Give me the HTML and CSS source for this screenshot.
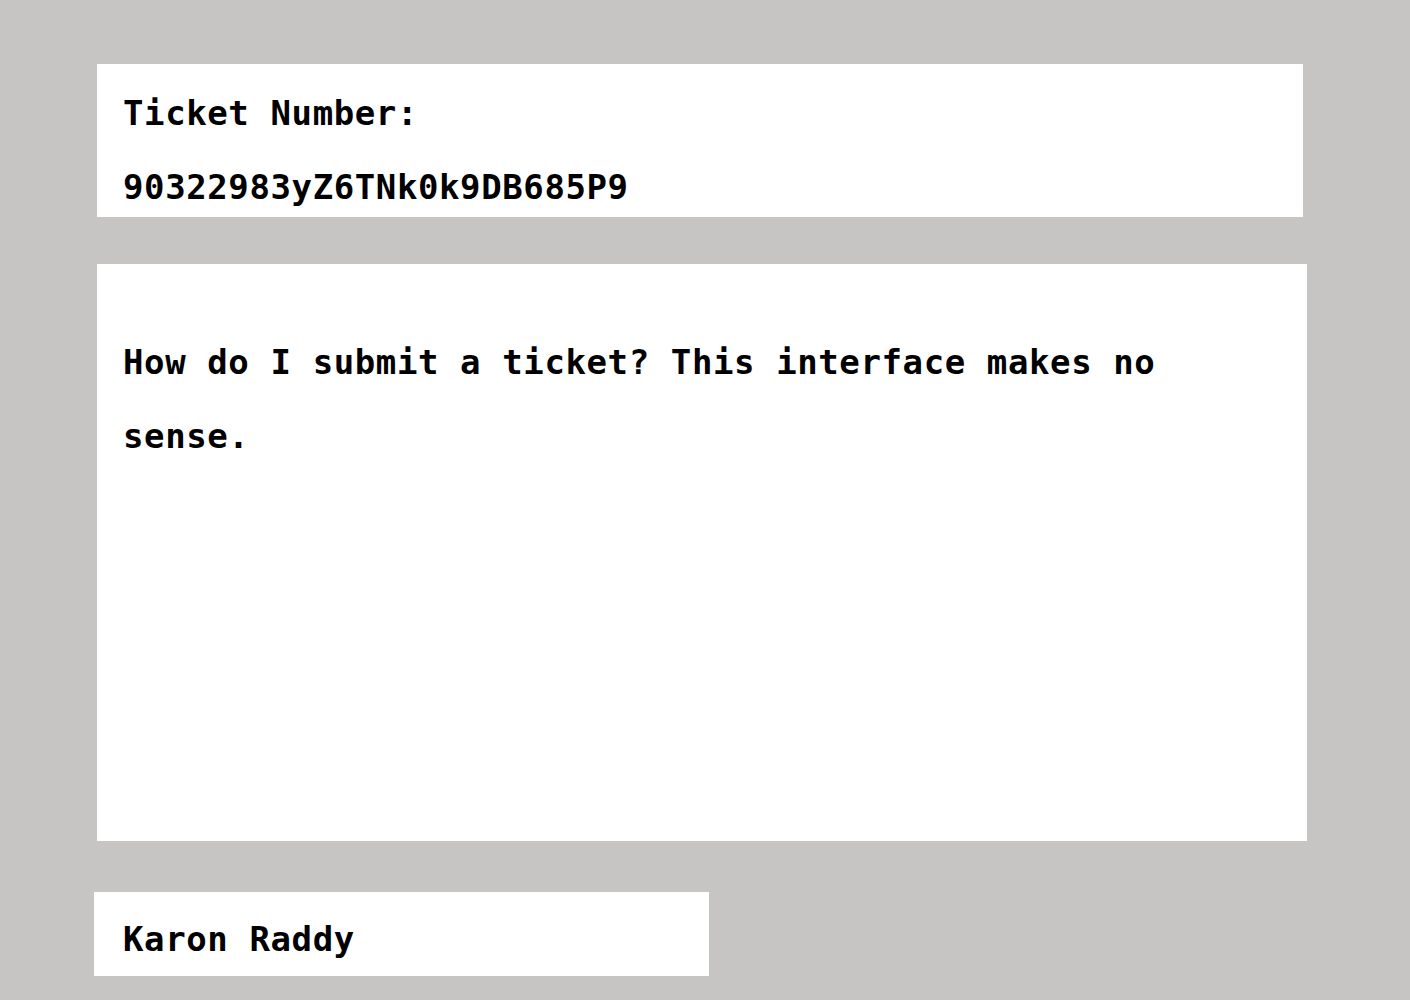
FILE: index.html
```html
<!DOCTYPE html>
<html>
<head>
<meta charset="utf-8">
<link rel="stylesheet" href="styles.css">
</head>
<body>
<main class="page">
  <section class="card ticket">
    <div class="line">Ticket Number:</div>
    <div class="line">90322983yZ6TNk0k9DB685P9</div>
  </section>
  <section class="card message">
    <p class="line">How do I submit a ticket? This interface makes no sense.</p>
  </section>
  <section class="card author">
    <div class="line">Karon Raddy</div>
  </section>
</main>
</body>
</html>
```
FILE: styles.css
```css
html, body {
  margin: 0;
  padding: 0;
  background: #c6c5c3;
}
.page {
  width: 1410px;
  height: 1000px;
  box-sizing: border-box;
  padding: 64px 0 0 97px;
  display: flex;
  flex-direction: column;
  align-items: flex-start;
  font-family: "DejaVu Sans Mono", monospace;
  font-weight: bold;
  font-size: 34px;
  letter-spacing: 0.6px;
  line-height: 74px;
  color: #000;
}
.card {
  background: #fff;
  box-sizing: border-box;
}
.line {
  margin: 0;
  white-space: pre-wrap;
}
.ticket {
  width: 1206px;
  height: 153px;
  padding: 12px 0 0 26px;
  overflow: hidden;
}
.message {
  margin-top: 47px;
  width: 1210px;
  height: 577px;
  padding: 61px 100px 0 26px;
}
.author {
  margin-top: 51px;
  margin-left: -3px;
  width: 615px;
  height: 84px;
  padding: 10px 0 0 29px;
  overflow: hidden;
}
```
